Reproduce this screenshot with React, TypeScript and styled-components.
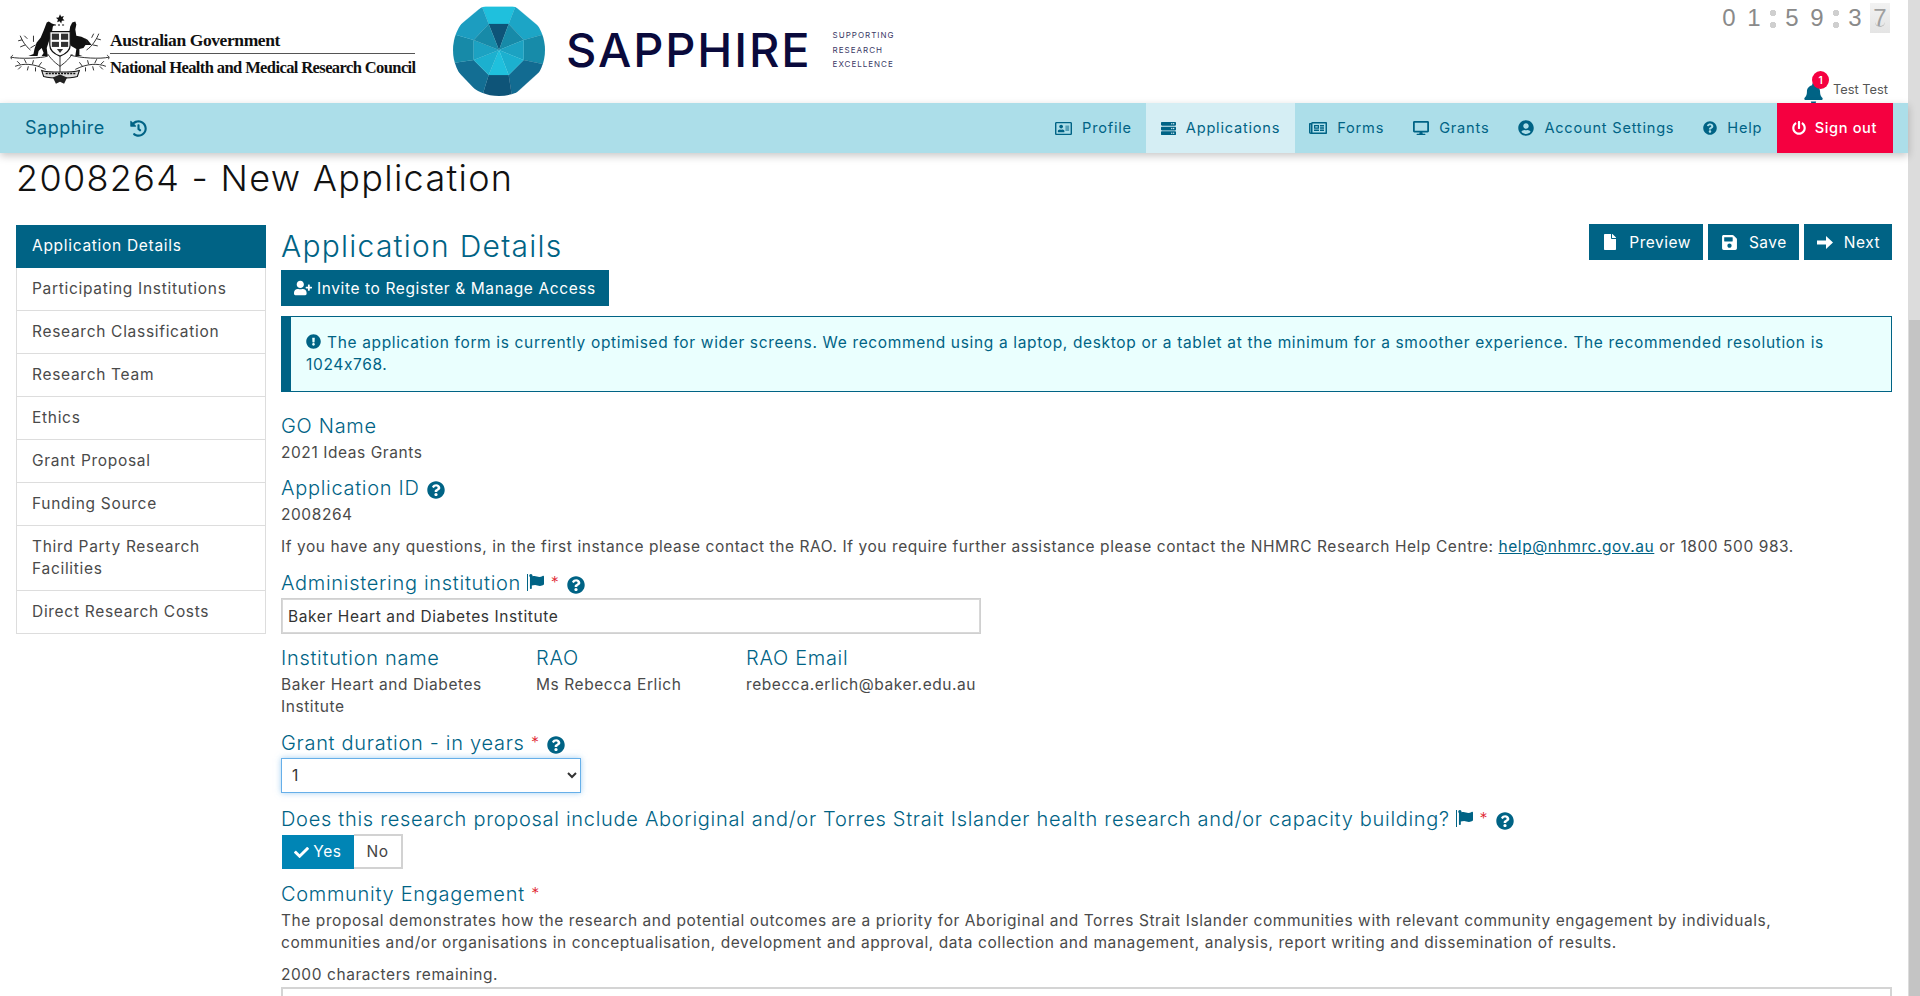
import React from "react";
import styled, { createGlobalStyle } from "styled-components";
import {
  FaBell,
  FaCheck,
  FaDesktop,
  FaExclamationCircle,
  FaFile,
  FaFlag,
  FaHistory,
  FaPowerOff,
  FaQuestionCircle,
  FaRegAddressCard,
  FaRegNewspaper,
  FaSave,
  FaServer,
  FaUserCircle,
  FaUserPlus,
} from "react-icons/fa";

const BLUE = "#006385";
const TEXT = "#4a4a4a";
const FONT = `Inter, "Noto Sans", sans-serif`;

const GlobalStyle = createGlobalStyle`
  html, body {
    margin: 0;
    padding: 0;
    height: 100%;
    overflow: hidden;
    background: #fff;
  }
  * { box-sizing: border-box; }
`;

const navItems = [
  { label: "Profile", icon: <FaRegAddressCard size={17} /> },
  { label: "Applications", icon: <FaServer size={15} />, active: true },
  { label: "Forms", icon: <FaRegNewspaper size={18} /> },
  { label: "Grants", icon: <FaDesktop size={16} /> },
  { label: "Account Settings", icon: <FaUserCircle size={16} /> },
  { label: "Help", icon: <FaQuestionCircle size={14} /> },
];

const sideItems = [
  "Application Details",
  "Participating Institutions",
  "Research Classification",
  "Research Team",
  "Ethics",
  "Grant Proposal",
  "Funding Source",
  "Third Party Research Facilities",
  "Direct Research Costs",
];

const facets: [string, string][] = [
  ["#1fc0dd", "125,20 225,20 205,72 145,72"],
  ["#1ca5c6", "225,20 320,100 250,120 205,72"],
  ["#178ba9", "320,100 320,195 250,180 250,120"],
  ["#126b91", "320,195 215,290 205,225 250,180"],
  ["#0e5478", "215,290 125,290 145,225 205,225"],
  ["#136e93", "125,290 30,190 100,180 145,225"],
  ["#178aa8", "30,190 30,100 100,120 100,180"],
  ["#1c9dc0", "30,100 125,20 145,72 100,120"],
  ["#0e5478", "145,72 205,72 176,150"],
  ["#178aa8", "205,72 250,120 176,150"],
  ["#1ca2c2", "250,120 250,180 176,150"],
  ["#1cb0cf", "250,180 205,225 176,150"],
  ["#1fc0dd", "205,225 145,225 176,150"],
  ["#1cb0cf", "145,225 100,180 176,150"],
  ["#1ca2c2", "100,180 100,120 176,150"],
  ["#178aa8", "100,120 145,72 176,150"],
];

function Gem() {
  return (
    <GemSvg viewBox="38 12 276 276">
      <defs>
        <clipPath id="gem-clip">
          <circle cx="176" cy="150" r="138" />
        </clipPath>
      </defs>
      <g clipPath="url(#gem-clip)">
        {facets.map(([fill, points]) => (
          <polygon key={points} fill={fill} stroke={fill} strokeWidth="0.6" points={points} />
        ))}
      </g>
    </GemSvg>
  );
}

function Crest() {
  return (
    <CrestSvg viewBox="10 10 98 72">
      <g fill="#111">
        <path d="M59 11l1.2 2.5 2.6-.8-1.2 2.5 1.8 1.8-2.6.4-.6 2.6-1.6-2.2-2.4 1 .8-2.6-2-1.8 2.7-.2z" />
        <path d="M48 18l-2 1-3 8-3 7-4 5-2 6-1 5-5 2h9l1-5 3-3 2 5-2 3h6l-1-8 2-6 3-9 1-6 2-2-3-1z" />
        <path d="M71 19l3-1 1 3-1 5 1 6 5 1 6 3 4 5-6 0-2 3-4 1v6l3 1h-7l1-7-5-3-3-6 1-7 1-6z" />
        <rect x="53" y="21" width="2" height="1" />
        <rect x="57" y="21" width="2" height="1" />
        <rect x="61" y="21" width="2" height="1" />
      </g>
      <path d="M49 28h20v13c0 5-5 9-10 11-5-2-10-6-10-11z" fill="#fff" stroke="#111" strokeWidth="1.2" />
      <g fill="#333">
        <rect x="51" y="30" width="7" height="6" />
        <rect x="60" y="30" width="7" height="6" />
        <rect x="51" y="38" width="7" height="5" />
        <rect x="60" y="38" width="7" height="5" />
        <path d="M56 45h6l-3 4z" />
      </g>
      <g fill="none" stroke="#222" strokeWidth="0.9">
        <path d="M11 53c8 2 30 1 36-1M107 53c-8 2-28 1-38-2M13 51c-2 1-3 3-1 4M105 51c2 1 3 3 1 4" />
        <path d="M59 52v18M47 50c4 6 8 9 12 12M71 50c-4 6-8 9-12 12" />
        <path d="M20 32c2 5 5 10 10 14M22 36l-4 1M25 41l-5 2M27 35l-3-3M33 38v-6M30 44l5-3" />
        <path d="M97 30c-2 5-6 12-12 16M95 35l4 1M91 41l5 1M90 34l2-4M86 40l-2-5" />
        <path d="M15 62c8-3 18-3 30 3M20 60l-3-3M26 59l-2-4M32 60l1-4M38 62l3-4M21 62l-3 3M28 62l-1 4M35 63v4" />
        <path d="M104 62c-8-3-18-3-30 3M99 60l3-3M93 59l2-4M87 60l-1-4M81 62l-3-4M98 62l3 3M91 62l1 4M84 63v4" />
      </g>
      <path d="M41 66c6 2 30 2 37 0l-2 6c-8 2-25 2-33 0z" fill="#ddd" stroke="#111" strokeWidth="1" />
      <path d="M45 69h29" stroke="#111" strokeWidth="1.6" strokeDasharray="2 1" />
      <path d="M52 73l7-3 7 3-3 6-4-2-4 2z" fill="#222" />
    </CrestSvg>
  );
}

function NextArrow() {
  return (
    <svg width="16" height="13" viewBox="0 0 16 13" fill="currentColor">
      <path d="M0 4.5h9V0l7 6.5-7 6.5V8.5H0z" />
    </svg>
  );
}

function Help() {
  return (
    <HelpDot>
      <FaQuestionCircle size={18} />
    </HelpDot>
  );
}

function FlagMark() {
  return (
    <FlagWrap>
      <FaFlag size={15} />
    </FlagWrap>
  );
}

export default function App() {
  return (
    <>
      <GlobalStyle />
      <Viewport>
        <Page>
          <TopBar>
            <Crest />
            <GovText>
              <GovLine $first>Australian Government</GovLine>
              <GovLine>National Health and Medical Research Council</GovLine>
            </GovText>
            <Gem />
            <SapphireWord>SAPPHIRE</SapphireWord>
            <Tagline>
              <span>SUPPORTING</span>
              <span>RESEARCH</span>
              <span>EXCELLENCE</span>
            </Tagline>
            <TopRight>
              <Timer>
                <Digit>0</Digit>
                <Digit>1</Digit>
                <Colon />
                <Digit>5</Digit>
                <Digit>9</Digit>
                <Colon />
                <Digit>3</Digit>
                <RollingDigit>7</RollingDigit>
              </Timer>
              <UserRow>
                <BellWrap>
                  <FaBell size={21} />
                  <Badge>1</Badge>
                </BellWrap>
                <UserName>Test Test</UserName>
              </UserRow>
            </TopRight>
          </TopBar>

          <Nav>
            <Brand>Sapphire</Brand>
            <BrandIcon>
              <FaHistory size={17} />
            </BrandIcon>
            <NavItems>
              {navItems.map((item) => (
                <NavItem key={item.label} $active={item.active}>
                  {item.icon}
                  {item.label}
                </NavItem>
              ))}
              <SignOut>
                <FaPowerOff size={14} />
                Sign out
              </SignOut>
            </NavItems>
          </Nav>

          <Content>
            <PageTitle>2008264 - New Application</PageTitle>
            <Columns>
              <Sidebar>
                {sideItems.map((label, i) => (
                  <SideItem key={label} $active={i === 0}>
                    {label}
                  </SideItem>
                ))}
              </Sidebar>
              <Form>
                <HeadRow>
                  <Heading>Application Details</Heading>
                  <Actions>
                    <ActionButton>
                      <FaFile size={16} />
                      Preview
                    </ActionButton>
                    <ActionButton>
                      <FaSave size={17} />
                      Save
                    </ActionButton>
                    <ActionButton>
                      <NextArrow />
                      Next
                    </ActionButton>
                  </Actions>
                </HeadRow>
                <InviteButton>
                  <FaUserPlus size={18} />
                  Invite to Register &amp; Manage Access
                </InviteButton>
                <Alert>
                  <AlertIcon>
                    <FaExclamationCircle size={15} />
                  </AlertIcon>
                  The application form is currently optimised for wider screens. We recommend using a laptop, desktop or a tablet at the minimum for a smoother experience. The recommended resolution is 1024x768.
                </Alert>

                <Label $top={22}>GO Name</Label>
                <Value $top={4}>2021 Ideas Grants</Value>

                <Label $top={12}>
                  Application ID <Help />
                </Label>
                <Value $top={4}>2008264</Value>

                <Value $top={10}>
                  If you have any questions, in the first instance please contact the RAO. If you require further assistance please contact the NHMRC Research Help Centre:{" "}
                  <MailLink href="#">help@nhmrc.gov.au</MailLink> or 1800 500 983.
                </Value>

                <Label $top={12}>
                  Administering institution <FlagMark /> <Star>*</Star> <Help />
                </Label>
                <TextInput readOnly value="Baker Heart and Diabetes Institute" />

                <InfoRow>
                  <InfoCol $width={255}>
                    <Label>Institution name</Label>
                    <InfoValue>Baker Heart and Diabetes Institute</InfoValue>
                  </InfoCol>
                  <InfoCol $width={210}>
                    <Label>RAO</Label>
                    <InfoValue>Ms Rebecca Erlich</InfoValue>
                  </InfoCol>
                  <InfoCol $width={270}>
                    <Label>RAO Email</Label>
                    <InfoValue>rebecca.erlich@baker.edu.au</InfoValue>
                  </InfoCol>
                </InfoRow>

                <Label $top={12}>
                  Grant duration - in years <Star>*</Star> <Help />
                </Label>
                <DurationSelect defaultValue="1">
                  <option value="1">1</option>
                  <option value="2">2</option>
                  <option value="3">3</option>
                </DurationSelect>

                <Label $top={13}>
                  Does this research proposal include Aboriginal and/or Torres Strait Islander health research and/or capacity building? <FlagMark /> <Star>*</Star> <Help />
                </Label>
                <Toggle>
                  <ToggleYes>
                    <FaCheck size={15} />
                    Yes
                  </ToggleYes>
                  <ToggleNo>No</ToggleNo>
                </Toggle>

                <Label $top={12}>
                  Community Engagement <Star>*</Star>
                </Label>
                <CriteriaText>
                  The proposal demonstrates how the research and potential outcomes are a priority for Aboriginal and Torres Strait Islander communities with relevant community engagement by individuals, communities and/or organisations in conceptualisation, development and approval, data collection and management, analysis, report writing and dissemination of results.
                </CriteriaText>
                <Value $top={10}>2000 characters remaining.</Value>
                <TextBox readOnly />
              </Form>
            </Columns>
          </Content>
        </Page>
        <ScrollTrack>
          <ScrollThumb />
        </ScrollTrack>
      </Viewport>
    </>
  );
}

const Viewport = styled.div`
  display: flex;
  height: 100vh;
  overflow: hidden;
  font-family: ${FONT};
  font-size: 15.5px;
  line-height: 22px;
  letter-spacing: 0.57px;
  color: ${TEXT};
`;

const Page = styled.div`
  flex: 1;
  min-width: 0;
`;

const ScrollTrack = styled.div`
  flex: 0 0 12px;
  background: #dcdcdc;
  padding-top: 320px;
`;

const ScrollThumb = styled.div`
  height: 100%;
  margin-left: 1px;
  background: #c4c4c4;
`;

const TopBar = styled.header`
  height: 103px;
  display: flex;
  align-items: center;
  padding: 0 0 3px 10px;
`;

const CrestSvg = styled.svg`
  width: 100px;
  height: 76px;
  flex: none;
  filter: blur(0.3px);
`;

const GovText = styled.div`
  width: 305px;
  margin-top: 8px;
  font-family: "Liberation Serif", serif;
  font-weight: bold;
  color: #111;
`;

const GovLine = styled.div<{ $first?: boolean }>`
  font-size: ${(p) => (p.$first ? "17.5px" : "16.5px")};
  letter-spacing: ${(p) => (p.$first ? "-0.4px" : "-0.6px")};
  line-height: 22px;
  white-space: nowrap;
  ${(p) => !p.$first && "border-top: 1.5px solid #555; margin-top: 2px; padding-top: 3px;"}
`;

const GemSvg = styled.svg`
  width: 92px;
  height: 92px;
  flex: none;
  margin-left: 38px;
`;

const SapphireWord = styled.div`
  margin-left: 21px;
  font-size: 47px;
  font-weight: 500;
  line-height: 60px;
  color: #0a0a3c;
  letter-spacing: 1.9px;
`;

const Tagline = styled.div`
  display: flex;
  flex-direction: column;
  margin-left: 21px;
  font-size: 8px;
  line-height: 14.5px;
  letter-spacing: 1px;
  color: #3a3a66;
`;

const TopRight = styled.div`
  margin-left: auto;
  height: 103px;
  display: flex;
  flex-direction: column;
  align-items: flex-end;
  justify-content: space-between;
  padding: 3px 18px 0 0;
  align-self: flex-start;
  letter-spacing: 0;
`;

const Timer = styled.div`
  display: flex;
  gap: 5px;
  height: 30px;
  align-items: center;
`;

const Digit = styled.span`
  width: 20px;
  height: 30px;
  text-align: center;
  font-family: "Liberation Sans", sans-serif;
  font-size: 24px;
  line-height: 30px;
  color: #8a8a8a;
`;

const RollingDigit = styled(Digit)`
  position: relative;
  background: linear-gradient(#f2f2f2, #e4e4e4);
  color: #a0a0a0;

  &::after {
    content: "";
    position: absolute;
    left: 5px;
    bottom: 6px;
    width: 10px;
    height: 4px;
    border-bottom: 1.5px solid #b4b4b4;
    border-radius: 0 0 6px 6px;
  }
`;

const Colon = styled.span`
  width: 8px;
  height: 20px;
  margin-top: 2px;
  background:
    radial-gradient(circle at center, #cfcfcf 3px, transparent 3.5px) top / 8px 8px no-repeat,
    radial-gradient(circle at center, #cfcfcf 3px, transparent 3.5px) bottom / 8px 8px no-repeat;
`;

const UserRow = styled.div`
  display: flex;
  align-items: center;
  gap: 9px;
  height: 26px;
  padding-right: 2px;
  color: ${BLUE};
`;

const BellWrap = styled.span`
  position: relative;
  display: flex;
  margin-top: 6px;
`;

const Badge = styled.span`
  position: absolute;
  top: -12px;
  left: 9px;
  width: 17px;
  height: 18px;
  border-radius: 50%;
  background: #f50040;
  color: #fff;
  font-size: 10px;
  font-weight: 600;
  line-height: 18px;
  text-align: center;
`;

const UserName = styled.span`
  font-size: 12.8px;
  color: #555;
`;

const Nav = styled.nav`
  position: relative;
  height: 50px;
  display: flex;
  align-items: center;
  padding: 0 15px 0 25px;
  background: #acdee9;
  box-shadow: 0 3px 8px rgba(0, 0, 0, 0.22);
  color: ${BLUE};
`;

const Brand = styled.span`
  font-size: 18px;
  letter-spacing: 0.5px;
`;

const BrandIcon = styled.span`
  display: flex;
  margin-left: 25px;
`;

const NavItems = styled.div`
  margin-left: auto;
  height: 100%;
  display: flex;
`;

const NavItem = styled.a<{ $active?: boolean }>`
  display: flex;
  align-items: center;
  gap: 10px;
  padding: 0 14.5px;
  font-size: 14.6px;
  letter-spacing: 0.78px;
  background: ${(p) => (p.$active ? "#d5eef4" : "transparent")};
`;

const SignOut = styled.a`
  display: flex;
  align-items: center;
  gap: 9px;
  padding: 0 16px 0 15px;
  background: #f50040;
  color: #fff;
  font-size: 14.6px;
  font-weight: 500;
  letter-spacing: 0.6px;
`;

const Content = styled.main`
  padding: 0 16px;
`;

const PageTitle = styled.h1`
  margin: 0 0 22px;
  font-size: 36px;
  font-weight: 300;
  line-height: 50px;
  letter-spacing: 1.3px;
  color: #111;
`;

const Columns = styled.div`
  display: grid;
  grid-template-columns: 250px 1fr;
  gap: 15px;
  align-items: start;
`;

const Sidebar = styled.aside`
  display: flex;
  flex-direction: column;
`;

const SideItem = styled.a<{ $active?: boolean }>`
  padding: 10px 30px 10px 15px;
  line-height: 22px;
  letter-spacing: 0.7px;
  border: 1px solid #ddd;
  border-top: 0;
  ${(p) =>
    p.$active
      ? `background: ${BLUE}; border-color: ${BLUE}; color: #fff;`
      : `color: ${TEXT};`}
`;

const Form = styled.section`
  min-width: 0;
`;

const HeadRow = styled.div`
  display: flex;
  justify-content: space-between;
  align-items: flex-start;
  height: 46px;
  margin-top: -1px;
`;

const Heading = styled.h2`
  margin: 0;
  font-size: 30px;
  font-weight: 300;
  line-height: 44px;
  letter-spacing: 1.25px;
  color: ${BLUE};
`;

const Actions = styled.div`
  display: flex;
  gap: 5px;
`;

const ActionButton = styled.button`
  height: 36px;
  display: flex;
  align-items: center;
  gap: 11px;
  padding: 0 12px 0 13px;
  border: 0;
  background: ${BLUE};
  color: #fff;
  font-family: ${FONT};
  font-size: 15.5px;
  letter-spacing: 0.5px;
`;

const InviteButton = styled.button`
  height: 36px;
  display: flex;
  align-items: center;
  gap: 5px;
  padding: 0 13px;
  border: 0;
  background: ${BLUE};
  color: #fff;
  font-family: ${FONT};
  font-size: 15.5px;
  letter-spacing: 0.6px;
`;

const Alert = styled.div`
  height: 76px;
  margin-top: 10px;
  padding: 15px 20px 0 15px;
  border: 1px solid ${BLUE};
  border-left-width: 10px;
  background: #eafffe;
  color: ${BLUE};
  letter-spacing: 0.65px;
`;

const AlertIcon = styled.span`
  margin-right: 6px;
  svg {
    vertical-align: -1px;
  }
`;

const Label = styled.div<{ $top?: number }>`
  height: 24px;
  margin-top: ${(p) => p.$top ?? 0}px;
  font-size: 20px;
  line-height: 24px;
  letter-spacing: 0.7px;
  font-weight: 300;
  color: ${BLUE};
  white-space: nowrap;
`;

const Value = styled.div<{ $top?: number }>`
  margin-top: ${(p) => p.$top ?? 3}px;
`;

const CriteriaText = styled.div`
  max-width: 1560px;
  margin-top: 5px;
`;

const HelpDot = styled.span`
  margin-left: 1px;
  svg {
    vertical-align: -4px;
  }
`;

const FlagWrap = styled.span`
  display: inline-block;
  border-left: 1.5px solid ${BLUE};
  padding-left: 1px;
  height: 17px;
  vertical-align: 1px;
  line-height: 0;
`;

const Star = styled.span`
  color: #e0202c;
  font-size: 16px;
  vertical-align: 2px;
`;

const MailLink = styled.a`
  color: ${BLUE};
  text-decoration: underline;
`;

const TextInput = styled.input`
  display: block;
  width: 700px;
  height: 36px;
  margin-top: 4px;
  padding: 0 6px;
  border: 1px solid #d0d0d0;
  outline: 1px solid #d8d8d8;
  outline-offset: -2px;
  font-family: ${FONT};
  font-size: 15.5px;
  letter-spacing: 0.6px;
  color: #333;
`;

const InfoRow = styled.div`
  display: flex;
  margin-top: 12px;
`;

const InfoCol = styled.div<{ $width: number }>`
  width: ${(p) => p.$width}px;
  padding-right: 25px;
  flex: none;
`;

const InfoValue = styled.div`
  margin-top: 4px;
`;

const DurationSelect = styled.select`
  display: block;
  width: 300px;
  height: 35px;
  margin-top: 4px;
  padding: 0 6px;
  border: 1px solid #66afe9;
  border-radius: 0;
  background: #fff;
  box-shadow: 0 0 6px rgba(102, 175, 233, 0.6);
  font-family: ${FONT};
  font-size: 15.5px;
  color: #333;
`;

const Toggle = styled.div`
  display: flex;
  margin-top: 4px;
  height: 35px;
`;

const ToggleYes = styled.div`
  width: 72px;
  margin-left: 1px;
  margin-top: 1px;
  display: flex;
  align-items: center;
  justify-content: center;
  gap: 4px;
  background: #0085b5;
  color: #fff;
`;

const ToggleNo = styled.div`
  width: 49px;
  display: flex;
  align-items: center;
  justify-content: center;
  border: 2px solid #d2d2d2;
  border-left: 0;
  color: #444;
`;

const TextBox = styled.textarea`
  display: block;
  width: 100%;
  height: 150px;
  margin-top: 1px;
  border: 2px solid #d4d4d4;
  resize: none;
`;
